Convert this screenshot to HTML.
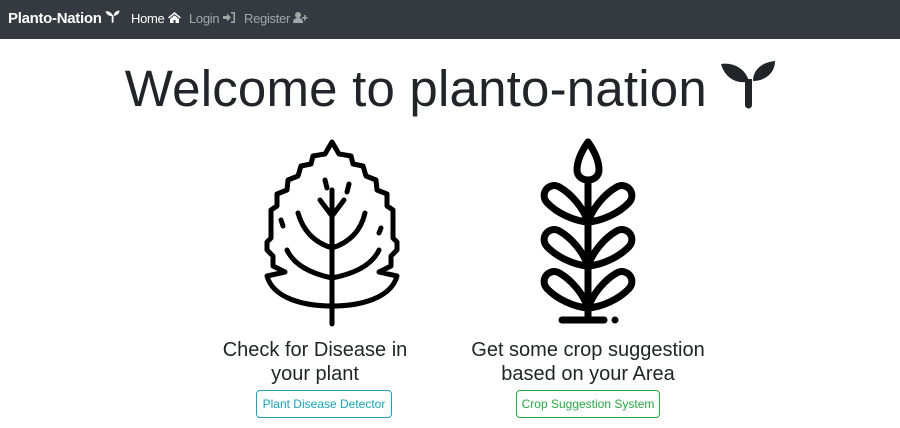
<!DOCTYPE html>
<html><head><style>
*{margin:0;padding:0;box-sizing:border-box}
body{width:900px;height:428px;background:#fff;font-family:"Liberation Sans",sans-serif;position:relative;overflow:hidden;color:#212529}
nav{position:absolute;left:0;top:0;width:900px;height:39px;background:#343a40}
.brand{position:absolute;left:8px;top:10px;color:#fff;font-weight:bold;font-size:15px;letter-spacing:-0.3px}
.nl{position:absolute;top:11px;font-size:13px;color:rgba(255,255,255,.55);letter-spacing:-0.3px}
h1{position:absolute;left:0;width:900px;top:59px;text-align:center;font-weight:normal;font-size:51px;letter-spacing:0.2px}
.sub{position:absolute;font-size:20px;text-align:center;line-height:24px}
.btn{position:absolute;height:28px;border:1px solid;border-radius:4px;font-size:12px;text-align:center;line-height:26px}
</style></head><body>
<nav>
<div class="brand">Planto-Nation <svg width="15" height="13" viewBox="0 0 54 50"><path d="M0 5C10 3 24 8 28 22C18 26 4 20 0 5Z M24 20h7v26a3.5 3.5 0 0 1-7 0Z M32 22C32 10 42 3 54 2C54 14 44 22 32 22Z" fill="#fff"/></svg></div>
<div class="nl" style="left:131px;color:#fff">Home <svg width="13" height="11" viewBox="0 0 13 11"><path d="M6.5 0L0 5.5l1 1 5.5-4.5 5.5 4.5 1-1zM2 7v4h3.5V8h2v3H11V7L6.5 3.3z" fill="#fff"/></svg></div>
<div class="nl" style="left:189px">Login <svg width="12" height="11" viewBox="0 0 12 11"><path d="M0 4h4V1.5L8 5.5 4 9.5V7H0zM8 0h4v11H8V9.5h2.5v-8H8z" fill="rgba(255,255,255,.55)"/></svg></div>
<div class="nl" style="left:244px">Register <svg width="15" height="11" viewBox="0 0 15 11"><circle cx="5" cy="3" r="3" fill="rgba(255,255,255,.55)"/><path d="M0 11c0-4 2-5 5-5s5 1 5 5z M11 3h1.5v2H14.5v1.5h-2v2H11v-2H9V5h2z" fill="rgba(255,255,255,.55)"/></svg></div>
</nav>
<h1>Welcome to planto-nation <svg width="54" height="50" viewBox="0 0 54 50" style="vertical-align:-3px"><path d="M0 5C10 3 24 8 28 22C18 26 4 20 0 5Z M24 20h7v26a3.5 3.5 0 0 1-7 0Z M32 22C32 10 42 3 54 2C54 14 44 22 32 22Z" fill="#212529"/></svg></h1>

<svg style="position:absolute;left:263px;top:138px" width="138" height="190" viewBox="0 0 138 190" fill="none" stroke="#000" stroke-width="5" stroke-linecap="round" stroke-linejoin="round">
<path d="M69 4 L62 16 L50 18 L48 26 L38 28 L35 38 L25 42 L24 52 L14 56 L14 68 L8 72 L8 100 L4 104 L4 112 L10 118 L10 128 L22 134 L4 138 C10 160 40 168 69 168 C98 168 128 160 134 138 L116 134 L128 128 L128 118 L134 112 L134 104 L130 100 L130 72 L124 68 L124 56 L114 52 L113 42 L103 38 L100 28 L90 26 L88 18 L76 16 Z"/>
<path d="M69 52 V186"/>
<path d="M69 78 L57 62 M69 78 L81 62"/>
<path d="M69 110 C50 104 40 92 35 75 M69 110 C88 104 98 92 102 75"/>
<path d="M69 140 C45 135 30 125 24 112 M69 140 C95 135 110 125 116 112"/>
<path d="M62 42 L64 50 M86 46 L84 54 M18 82 L20 88 M118 90 L116 95"/>
</svg>

<svg style="position:absolute;left:536px;top:138px" width="104" height="190" viewBox="0 0 104 190" fill="none" stroke="#000" stroke-width="7" stroke-linecap="round" stroke-linejoin="round">
<defs><path id="lf" d="M0 0 C12 -8 30 -12 44 -10 C56 -8 56 8 44 10 C30 12 12 8 0 0Z"/></defs>
<path d="M52 4 C45 14 41 24 41 32 C41 38 46 42 52 42 C58 42 63 38 63 32 C63 24 59 14 52 4Z"/>
<path d="M52 42 V182"/>
<use href="#lf" transform="translate(52,84) rotate(-142)"/>
<use href="#lf" transform="translate(52,84) rotate(-38)"/>
<use href="#lf" transform="translate(52,128) rotate(-142)"/>
<use href="#lf" transform="translate(52,128) rotate(-38)"/>
<use href="#lf" transform="translate(52,170) rotate(-142)"/>
<use href="#lf" transform="translate(52,170) rotate(-38)"/>
<path d="M26 182 H68"/>
<circle cx="79" cy="182" r="3.5" fill="#000" stroke="none"/>
</svg>

<div class="sub" style="left:205px;width:220px;top:338px">Check for Disease in<br>your plant</div>
<div class="sub" style="left:458px;width:260px;top:338px">Get some crop suggestion<br>based on your Area</div>
<div class="btn" style="left:256px;top:390px;width:136px;color:#17a2b8;border-color:#17a2b8">Plant Disease Detector</div>
<div class="btn" style="left:516px;top:390px;width:144px;color:#28a745;border-color:#28a745">Crop Suggestion System</div>
</body></html>
